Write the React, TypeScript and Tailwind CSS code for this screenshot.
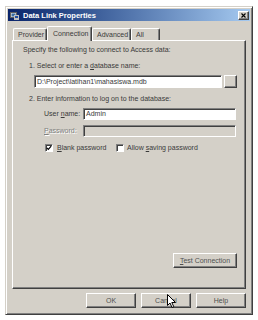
import React from "react";

const raised =
  "border border-t-white border-l-white border-r-[#404040] border-b-[#404040] shadow-[inset_-1px_-1px_0_#808080]";
const sunken =
  "border border-t-[#808080] border-l-[#808080] border-r-white border-b-white shadow-[inset_1px_1px_0_#404040]";

function Tab({ label, active, w }: { label: string; active?: boolean; w: string }) {
  return (
    <div
      className={`${w} ${
        active ? "h-[15px] -mb-px z-10 bg-[#d4d0c8] pl-[5px]" : "h-[12px] pl-[4px]"
      } border-t border-l border-r border-t-white border-l-white border-r-[#404040] rounded-t-[2px] flex items-center text-[7px] leading-[8px] text-[#3a3a3a] shadow-[inset_-1px_0_0_#808080]`}
    >
      {label}
    </div>
  );
}

function Btn({ children, cls }: { children: React.ReactNode; cls: string }) {
  return (
    <div className={`${cls} ${raised} bg-[#d4d0c8] flex items-center justify-center text-[7px] leading-[8px] text-[#505050]`}>
      {children}
    </div>
  );
}

function Check({ checked }: { checked?: boolean }) {
  return (
    <div className={`w-[8px] h-[8px] bg-white ${sunken} flex items-center justify-center`}>
      {checked && (
        <svg width="6" height="6" viewBox="0 0 6 6">
          <path d="M0.8 2.8 L2.3 4.3 L5.2 1.2" stroke="#000" strokeWidth="1.2" fill="none" />
        </svg>
      )}
    </div>
  );
}

export default function App() {
  return (
    <div
      className="w-[258px] h-[320px] bg-white pl-[5px] pt-[6px]"
      style={{ fontFamily: '"Liberation Sans", Arial, sans-serif' }}
    >
      <div className="w-[248px] h-[309px] bg-[#d4d0c8] border border-t-[#d4d0c8] border-l-[#d4d0c8] border-r-[#404040] border-b-[#404040] shadow-[inset_1px_1px_0_#fff,inset_-1px_-1px_0_#808080] p-[2px] flex flex-col">
        {/* title bar */}
        <div className="h-[12px] bg-gradient-to-r from-[#0a246a] to-[#a6caf0] flex items-center pl-[2px] pr-[1px]">
          <svg width="9" height="9" viewBox="0 0 9 9" className="shrink-0">
            <rect x="0.5" y="1.5" width="6" height="5" fill="#e8e8e8" stroke="#606060" />
            <rect x="1.5" y="2.5" width="4" height="3" fill="#3a6ea5" />
            <rect x="4" y="4" width="5" height="5" fill="#c0c0c0" />
            <rect x="5" y="5" width="3" height="2" fill="#2050a0" />
          </svg>
          <span className="ml-[4px] text-white font-bold text-[7.5px] leading-[9px]">Data Link Properties</span>
          <div className="flex-1" />
          <div className={`w-[11px] h-[9px] ${raised} bg-[#d4d0c8] flex items-center justify-center`}>
            <svg width="5" height="5" viewBox="0 0 5 5">
              <path d="M0.5 0.5 L4.5 4.5 M4.5 0.5 L0.5 4.5" stroke="#000" strokeWidth="1.1" />
            </svg>
          </div>
        </div>

        {/* tabs */}
        <div className="mt-[5px] px-[4px] flex flex-col">
          <div className="flex items-end pl-[1px] h-[14px]">
            <Tab label="Provider" w="w-[34px]" />
            <Tab label="Connection" w="w-[45px]" active />
            <Tab label="Advanced" w="w-[39px]" />
            <Tab label="All" w="w-[29px]" />
          </div>

          {/* panel */}
          <div className="h-[249px] border border-t-white border-l-white border-r-[#404040] border-b-[#404040] shadow-[inset_-1px_-1px_0_#808080] pt-[5px] pl-[10px] pr-[8px] pb-[20px] flex flex-col text-[7px] leading-[8px] text-[#3a3a3a]">
            <div>Specify the following to connect to Access data:</div>
            <div className="mt-[8px] pl-[6px]">
              1. Select or enter a <span className="underline">d</span>atabase name:
            </div>
            <div className="mt-[5px] pl-[11px] flex items-center gap-[2px]">
              <div className={`w-[188px] h-[13px] bg-white ${sunken} pl-[2px] flex items-center`}>
                D:\Project\latihan1\mahasiswa.mdb
              </div>
              <div className={`w-[13px] h-[13px] ${raised} bg-[#d4d0c8]`} />
            </div>
            <div className="mt-[7px] pl-[6px]">2. Enter information to log on to the database:</div>
            <div className="mt-[5px] pl-[21px] flex items-center">
              <div className="w-[39px]">
                User <span className="underline">n</span>ame:
              </div>
              <div className={`w-[153px] h-[12px] bg-white ${sunken} pl-[2px] flex items-center`}>Admin</div>
            </div>
            <div className="mt-[5px] pl-[21px] flex items-center">
              <div className="w-[39px] text-[#808080] [text-shadow:1px_1px_0_#fff]">
                <span className="underline">P</span>assword:
              </div>
              <div className={`w-[153px] h-[12px] bg-[#d4d0c8] ${sunken}`} />
            </div>
            <div className="mt-[7px] pl-[22px] flex items-center">
              <Check checked />
              <span className="ml-[4px] w-[59px]">
                <span className="underline">B</span>lank password
              </span>
              <Check />
              <span className="ml-[3px]">
                Allow <span className="underline">s</span>aving password
              </span>
            </div>
            <div className="flex-1" />
            <div className="flex justify-end">
              <Btn cls="w-[64px] h-[15px]">
                <span>
                  <span className="underline">T</span>est Connection
                </span>
              </Btn>
            </div>
          </div>

          {/* bottom buttons */}
          <div className="mt-[4px] flex justify-end gap-[5px]">
            <Btn cls="w-[50px] h-[15px]">OK</Btn>
            <div className="relative">
              <Btn cls="w-[50px] h-[15px]">Cancel</Btn>
              <svg
                width="10"
                height="15"
                viewBox="0 0 10 15"
                className="absolute left-[26px] top-[1px]"
              >
                <path
                  d="M0.5 0.5 L0.5 11.5 L3 9 L5 13.5 L6.8 12.7 L4.8 8.5 L8.5 8.5 Z"
                  fill="#fff"
                  stroke="#000"
                  strokeWidth="1"
                  strokeLinejoin="miter"
                />
              </svg>
            </div>
            <Btn cls="w-[50px] h-[15px]">Help</Btn>
          </div>
        </div>
      </div>
    </div>
  );
}
